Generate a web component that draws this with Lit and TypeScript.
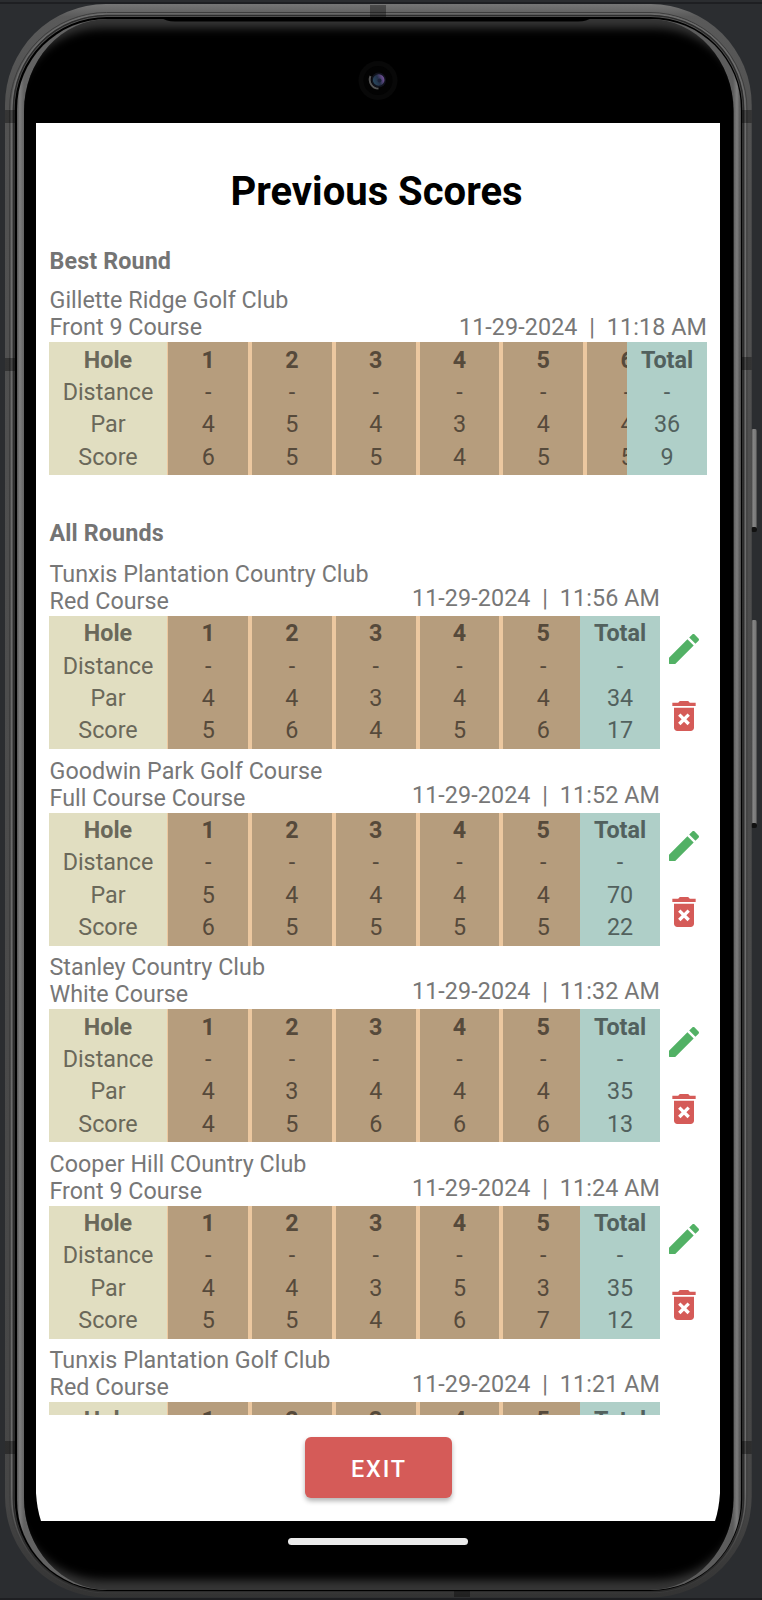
import { LitElement, html, css } from "lit";
import { customElement, property } from "lit/decorators.js";
import { classMap } from "lit/directives/class-map.js";

interface Round {
  club: string;
  course: string;
  date: string;
  par: string[];
  score: string[];
  parTotal: string;
  scoreTotal: string;
}

const BEST: Round = {
  club: "Gillette Ridge Golf Club", course: "Front 9 Course", date: "11-29-2024  |  11:18 AM",
  par: ["4", "5", "4", "3", "4", "4"], score: ["6", "5", "5", "4", "5", "5"], parTotal: "36", scoreTotal: "9",
};

const ROUNDS: Round[] = [
  { club: "Tunxis Plantation Country Club", course: "Red Course", date: "11-29-2024  |  11:56 AM",
    par: ["4", "4", "3", "4", "4"], score: ["5", "6", "4", "5", "6"], parTotal: "34", scoreTotal: "17" },
  { club: "Goodwin Park Golf Course", course: "Full Course Course", date: "11-29-2024  |  11:52 AM",
    par: ["5", "4", "4", "4", "4"], score: ["6", "5", "5", "5", "5"], parTotal: "70", scoreTotal: "22" },
  { club: "Stanley Country Club", course: "White Course", date: "11-29-2024  |  11:32 AM",
    par: ["4", "3", "4", "4", "4"], score: ["4", "5", "6", "6", "6"], parTotal: "35", scoreTotal: "13" },
  { club: "Cooper Hill COuntry Club", course: "Front 9 Course", date: "11-29-2024  |  11:24 AM",
    par: ["4", "4", "3", "5", "3"], score: ["5", "5", "4", "6", "7"], parTotal: "35", scoreTotal: "12" },
  { club: "Tunxis Plantation Golf Club", course: "Red Course", date: "11-29-2024  |  11:21 AM",
    par: [], score: [], parTotal: "", scoreTotal: "" },
];

@customElement("score-card")
class ScoreCard extends LitElement {
  @property({ attribute: false }) round!: Round;
  @property({ type: Boolean }) editable = false;

  static styles = css`
    :host { display: block; color: #777; font-size: 23.3px; line-height: 27px; }
    .card { display: flex; }
    .main { flex: 1; min-width: 0; }
    .head { display: flex; justify-content: space-between; align-items: flex-end; height: 56px; }
    .names { height: 56px; padding: 1px 0 0 0.5px; box-sizing: border-box; white-space: nowrap; letter-spacing: 0.02px; }
    .date { white-space: pre; letter-spacing: 0.1px; padding-bottom: 1.4px; }
    .date.raised { padding-bottom: 4px; }
    .table { display: flex; height: 133px; overflow: hidden; }
    .col { display: flex; flex-direction: column; flex: none; box-sizing: border-box; padding-top: 1.4px; text-align: center; line-height: 32.33px; }
    .col b { font-weight: 700; }
    .labels { width: 118px; background: #e1dec1; color: #6a685a; }
    .holes { display: flex; flex: 1; min-width: 0; overflow: hidden; }
    .hole { width: 83.8px; border: solid #ecc8a0; border-width: 0 2px; background: #b69d7d; color: #564a3b; }
    .hole:first-child { width: 83px; border-left-width: 1px; padding-left: 0.5px; }
    .total { width: 80px; background: #afcfc8; color: #52615e; }
    .tools { width: 47px; padding-top: 69px; display: flex; flex-direction: column; align-items: center; gap: 26.5px; flex: none; }
    .tools svg { width: 40px; height: 40px; display: block; }
    .edit { fill: #52b165; }
    .del { fill: #d55b58; }
  `;

  render() {
    const r = this.round;
    const full = r.par.length > 0;
    const holes = full ? r.par : ["", "", "", "", ""];
    const rest = (...cells: string[]) => (full ? cells.map((c) => html`<span>${c}</span>`) : "");
    return html`<div class="card">
      <div class="main">
        <div class="head">
          <div class="names">${r.club}<br />${r.course}</div>
          <div class=${classMap({ date: true, raised: this.editable })}>${r.date}</div>
        </div>
        <div class="table">
          <div class="col labels"><b>Hole</b>${rest("Distance", "Par", "Score")}</div>
          <div class="holes">
            ${holes.map((p, i) => html`<div class="col hole"><b>${i + 1}</b>${rest("-", p, r.score[i])}</div>`)}
          </div>
          <div class="col total"><b>Total</b>${rest("-", r.parTotal, r.scoreTotal)}</div>
        </div>
      </div>
      ${this.editable ? html`<div class="tools">
        <svg class="edit" viewBox="0 0 24 24"><path d="M20.71 7.04c.39-.39.39-1.04 0-1.41l-2.34-2.34c-.37-.39-1.02-.39-1.41 0l-1.84 1.83 3.75 3.75M3 17.5V20.5q0 .5 .5 .5H6.75L17.81 9.93l-3.75-3.75L3 17.25z"/></svg>
        <svg class="del" viewBox="0 0 24 24"><path fill-rule="evenodd" d="M6 19c0 1.1.9 2 2 2h8c1.1 0 2-.9 2-2V7H6v12zM8.46 11.88l1.41-1.41L12 12.59l2.12-2.12 1.41 1.41L13.41 14l2.12 2.12-1.41 1.41L12 15.41l-2.12 2.12-1.41-1.41L10.59 14l-2.13-2.12zM15.5 4l-1-1h-5l-1 1H5v2h14V4h-3.5z"/></svg>
      </div>` : ""}
    </div>`;
  }
}

@customElement("app-root")
class AppRoot extends LitElement {
  static styles = css`
    :host { display: grid; grid-template-columns: 762px; width: 762px; height: 1600px; overflow: hidden; background: #2b2d30; font-family: Roboto, sans-serif; }
    .frame, .device { grid-area: 1 / 1; }
    .frame { width: 762px; height: 1600px; display: block; }
    .device { position: relative; box-sizing: border-box; padding: 123px 42px 0 36px; display: flex; flex-direction: column; align-items: center; min-width: 0; min-height: 0; }
    .screen { width: 684px; height: 1398px; box-sizing: border-box; padding: 0 13px; background: #fff; display: flex; flex-direction: column; flex: none; clip-path: path("M0 0H684V1370Q683 1386 679 1398H5Q1 1386 0 1370Z"); }
    h1 { margin: 45px 0 0; padding-right: 3px; text-align: center; font-size: 40px; line-height: 48px; font-weight: 700; color: #000; }
    h2 { margin: 0; padding-left: 0.5px; font-size: 23.3px; letter-spacing: 0.12px; line-height: 27.33px; font-weight: 700; color: #747474; }
    .best { margin: 32px 0 11px; }
    .all { margin: 45px 0 0; }
    .list { margin-top: 12.45px; height: 854.6px; overflow: hidden; display: flex; flex-direction: column; gap: 7.55px; flex: none; }
    .list score-card { flex: none; }
    .exit { align-self: center; margin-top: 22.4px; width: 147px; height: 61px; border: 0; border-radius: 6px; background: #d55b58; color: #fff; font: 500 23.3px Roboto, sans-serif; letter-spacing: 1.9px; box-shadow: 0 3px 5px rgba(0,0,0,.3); padding: 2px 0 0 2px; }
    .pill { width: 180px; height: 7px; margin-top: 17px; border-radius: 4px; background: #ebebeb; }
  `;

  render() {
    return html`
      <svg class="frame" viewBox="0 0 762 1600">
        <defs>
          <linearGradient id="metal" x1="0" y1="4" x2="0" y2="1598" gradientUnits="userSpaceOnUse">
            <stop offset="0" stop-color="#767676"/><stop offset=".008" stop-color="#5a5a5a"/><stop offset=".06" stop-color="#525252"/>
            <stop offset=".94" stop-color="#464646"/><stop offset="1" stop-color="#333"/>
          </linearGradient>
          <linearGradient id="rim" x1="0" y1="0" x2="0" y2="1600" gradientUnits="userSpaceOnUse">
            <stop offset="0" stop-color="#6c6c6c"/><stop offset=".93" stop-color="#6c6c6c"/><stop offset=".98" stop-color="#3a3a3a"/>
          </linearGradient>
          <linearGradient id="bevelL" x1="17" y1="0" x2="24" y2="0" gradientUnits="userSpaceOnUse">
            <stop offset="0" stop-color="#555"/><stop offset=".4" stop-color="#7d7d7d"/><stop offset="1" stop-color="#626262"/>
          </linearGradient>
          <linearGradient id="bevelR" x1="741" y1="0" x2="733" y2="0" gradientUnits="userSpaceOnUse">
            <stop offset="0" stop-color="#4a4a4a"/><stop offset=".5" stop-color="#7d7d7d"/><stop offset="1" stop-color="#5c5c5c"/>
          </linearGradient>
          <linearGradient id="key" x1="751" y1="0" x2="757" y2="0" gradientUnits="userSpaceOnUse">
            <stop offset="0" stop-color="#333"/><stop offset=".35" stop-color="#858585"/><stop offset=".75" stop-color="#7a7a7a"/><stop offset="1" stop-color="#444"/>
          </linearGradient>
          <linearGradient id="lens" x1="372" y1="82" x2="386" y2="76" gradientUnits="userSpaceOnUse">
            <stop offset="0" stop-color="#294e63"/><stop offset=".45" stop-color="#243048"/><stop offset=".8" stop-color="#6f4f94"/><stop offset="1" stop-color="#251a35"/>
          </linearGradient>
          <filter id="soft" x="-5%" y="-5%" width="110%" height="110%"><feGaussianBlur stdDeviation="5"/></filter>
          <clipPath id="glass"><rect x="24" y="19" width="709.5" height="1571" rx="84" ry="92"/></clipPath>
        </defs>
        <rect y="2" width="762" height="2" fill="#1e1f22"/>
        <rect y="1598" width="762" height="2" fill="#1e1f22"/>
        <g fill="url(#key)">
          <rect x="751" y="429" width="6" height="102" rx="2"/>
          <rect x="751" y="620" width="6" height="207" rx="2"/>
        </g>
        <g fill="#111">
          <rect x="751" y="527" width="6" height="5" rx="2"/>
          <rect x="751" y="823" width="6" height="5" rx="2"/>
        </g>
        <rect x="5" y="4" width="746.7" height="1593.5" rx="101" fill="url(#metal)"/>
        <rect x="9.5" y="12.5" width="737.5" height="1580" rx="97" fill="none" stroke="#3e3e3e"/>
        <rect x="11.8" y="14" width="733.5" height="1578.5" rx="95" fill="none" stroke="url(#rim)" stroke-width="1.4"/>
        <rect x="13.5" y="15.5" width="730" height="1576" rx="93" fill="none" stroke="#2c2c2c" stroke-width="1.5"/>
        <rect x="14.7" y="17" width="727.6" height="1574" rx="92" fill="#000"/>
        <rect x="17" y="19" width="362" height="1571" rx="90" fill="url(#bevelL)"/>
        <rect x="379" y="19" width="362" height="1571" rx="90" fill="url(#bevelR)"/>
        <g clip-path="url(#glass)">
          <rect x="24" y="19" width="710" height="1571" fill="#363636"/>
          <rect x="14" y="28" width="730" height="1552" rx="88" fill="#000" filter="url(#soft)"/>
          <rect x="36" y="60" width="685" height="1500" rx="60" fill="#000"/>
        </g>
        <path d="M161 18H592L586 20.5Q583 21.5 578 21.5H175Q170 21.5 167 20.5Z" fill="#000"/>
        <g fill="#000" opacity=".35">
          <rect x="5" y="110" width="10" height="13"/><rect x="5" y="358" width="10" height="13"/><rect x="5" y="1441" width="10" height="13"/>
          <rect x="742" y="110" width="9.7" height="13"/><rect x="742" y="357" width="9.7" height="13"/><rect x="742" y="1441" width="9.7" height="13"/>
          <rect x="370" y="5" width="16" height="12"/><rect x="454" y="1591" width="16" height="6"/>
        </g>
        <circle cx="378" cy="80.5" r="19.5" fill="#080808"/>
        <circle cx="378" cy="80.5" r="14.5" fill="#030303"/>
        <path d="M370.5 76A9 9 0 0 0 378.5 88.6" fill="none" stroke="#555" stroke-width="2"/>
        <circle cx="378.7" cy="80" r="7.4" fill="#10121c"/>
        <circle cx="378.7" cy="80" r="5.8" fill="url(#lens)"/>
        <circle cx="379.5" cy="80.5" r="2" fill="#1c2238"/>
      </svg>
      <div class="device">
        <main class="screen">
          <h1>Previous Scores</h1>
          <h2 class="best">Best Round</h2>
          <score-card .round=${BEST}></score-card>
          <h2 class="all">All Rounds</h2>
          <div class="list">${ROUNDS.map((r) => html`<score-card .round=${r} editable></score-card>`)}</div>
          <button class="exit">EXIT</button>
        </main>
        <div class="pill"></div>
      </div>`;
  }
}
